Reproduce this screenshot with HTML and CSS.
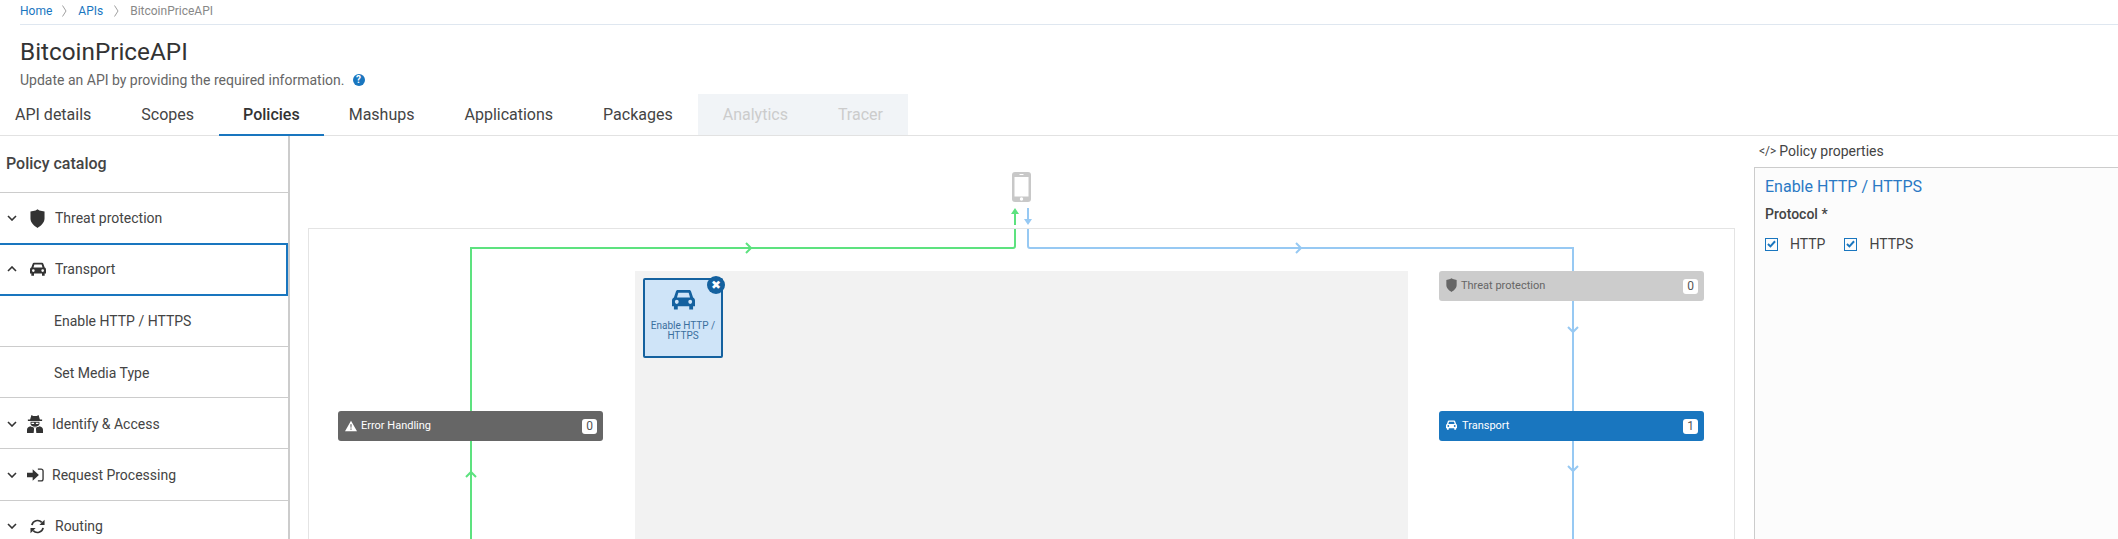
FILE: index.html
```html
<!DOCTYPE html>
<html lang="en">

<head>
    <meta charset="UTF-8" />
    <title>BitcoinPriceAPI - Policies</title>
    <link rel="stylesheet" href="styles.css">
</head>

<body>
    <svg class="defs" xmlns="http://www.w3.org/2000/svg">
        <symbol id="i-shield" viewBox="0 0 16 20">
            <path d="M8 0 L10 1.4 L15.5 2.6 V10 C15.5 14.5 11.5 18 8 20 C4.5 18 .5 14.5 .5 10 V2.6 L6 1.4 Z" />
        </symbol>
        <symbol id="i-car" viewBox="0 0 24 20" preserveAspectRatio="none">
            <path fill-rule="evenodd" d="M6 1 H18 C19 1 19.7 1.6 20 2.5 L22 8 C23.2 8.4 24 9.5 24 11 V16.5 H22 V19.5 H18 V16.5 H6 V19.5 H2 V16.5 H0 V11 C0 9.5 .8 8.4 2 8 L4 2.5 C4.3 1.6 5 1 6 1 Z M6.6 3.6 L5.2 8 H18.8 L17.4 3.6 Z M5 10.2 A2 2 0 1 0 5 14.2 A2 2 0 1 0 5 10.2 Z M19 10.2 A2 2 0 1 0 19 14.2 A2 2 0 1 0 19 10.2 Z" />
        </symbol>
        <symbol id="i-secret" viewBox="0 0 18 20">
            <path d="M5 0 L7 1 H11 L13 0 L14.5 5 H17 V6.5 H1 V5 H3.5 Z" />
            <path fill-rule="evenodd" d="M4 7.5 H14 V10 C14 11.5 12 13 9 13 C6 13 4 11.5 4 10 Z M5 8.5 V10 H8 V8.5 Z M10 8.5 V10 H13 V8.5 Z" />
            <path d="M4 12.5 C1.5 13 0 14.5 0 16.5 V20 H7.5 L8 15 L7 13.8 H11 L10 15 L10.5 20 H18 V16.5 C18 14.5 16.5 13 14 12.5 C12.5 14 5.5 14 4 12.5 Z" />
        </symbol>
        <symbol id="i-signin" viewBox="0 0 18 14">
            <path d="M0 4.5 H6 V.8 L12.6 7 L6 13.2 V9.5 H0 Z" />
            <path d="M11.5 .8 H15 A2 2 0 0 1 17 2.8 V11.2 A2 2 0 0 1 15 13.2 H11.5" fill="none" stroke="currentColor" stroke-width="1.4" />
        </symbol>
        <symbol id="i-refresh" viewBox="0 0 16 16">
            <path d="M2 6.6 A6.2 6.2 0 0 1 12.6 3.6" fill="none" stroke="currentColor" stroke-width="1.8" />
            <path d="M15.5 .8 V6.4 H10 Z" />
            <path d="M14 9.4 A6.2 6.2 0 0 1 3.4 12.4" fill="none" stroke="currentColor" stroke-width="1.8" />
            <path d="M.5 15.2 V9.6 H6 Z" />
        </symbol>
        <symbol id="i-down" viewBox="0 0 10 6">
            <path d="M1 1 L5 5 L9 1" fill="none" stroke="currentColor" stroke-width="1.6" />
        </symbol>
        <symbol id="i-up" viewBox="0 0 10 6">
            <path d="M1 5 L5 1 L9 5" fill="none" stroke="currentColor" stroke-width="1.6" />
        </symbol>
        <symbol id="i-crumb" viewBox="0 0 5 12">
            <path d="M.5 .5 L4 6 L.5 11.5" fill="none" stroke="currentColor" stroke-width=".8" />
        </symbol>
        <symbol id="i-check" viewBox="0 0 10 9">
            <path d="M1 4.5 L3.8 7.2 L9 1.4" fill="none" stroke="currentColor" stroke-width="2.2" />
        </symbol>
    </svg>

    <nav class="breadcrumb">
        <a href="#">Home</a>
        <svg class="crumb-sep"><use href="#i-crumb" /></svg>
        <a href="#">APIs</a>
        <svg class="crumb-sep"><use href="#i-crumb" /></svg>
        <span>BitcoinPriceAPI</span>
    </nav>

    <header class="page-head">
        <h1>BitcoinPriceAPI</h1>
        <p>Update an API by providing the required information. <span class="help">?</span></p>
    </header>

    <div class="tabs">
        <a class="tab" href="#">API details</a>
        <a class="tab" href="#">Scopes</a>
        <a class="tab active" href="#">Policies</a>
        <a class="tab" href="#">Mashups</a>
        <a class="tab" href="#">Applications</a>
        <a class="tab" href="#">Packages</a>
        <a class="tab disabled" href="#">Analytics</a>
        <a class="tab disabled" href="#">Tracer</a>
    </div>

    <main class="workspace">
        <aside class="catalog">
            <h2>Policy catalog</h2>
            <div class="cat-row">
                <svg class="chev"><use href="#i-down" /></svg>
                <svg class="cat-icon shield"><use href="#i-shield" /></svg>
                <span>Threat protection</span>
            </div>
            <div class="cat-row selected">
                <svg class="chev"><use href="#i-up" /></svg>
                <svg class="cat-icon car"><use href="#i-car" /></svg>
                <span>Transport</span>
            </div>
            <div class="cat-row sub">Enable HTTP / HTTPS</div>
            <div class="cat-row sub low">Set Media Type</div>
            <div class="cat-row low">
                <svg class="chev"><use href="#i-down" /></svg>
                <svg class="cat-icon secret"><use href="#i-secret" /></svg>
                <span>Identify &amp; Access</span>
            </div>
            <div class="cat-row low">
                <svg class="chev"><use href="#i-down" /></svg>
                <svg class="cat-icon signin"><use href="#i-signin" /></svg>
                <span>Request Processing</span>
            </div>
            <div class="cat-row low">
                <svg class="chev"><use href="#i-down" /></svg>
                <svg class="cat-icon refresh"><use href="#i-refresh" /></svg>
                <span>Routing</span>
            </div>
        </aside>

        <section class="canvas">
            <div class="frame"></div>
            <div class="drop-zone"></div>

            <svg class="wires" viewBox="0 0 1464 403" xmlns="http://www.w3.org/2000/svg">
                <g class="wire green">
                    <path d="M181 403 V112 H723 Q725 112 725 110 V93" />
                    <path class="tip" d="M456 107 L461 112 L456 117" />
                    <path class="tip" d="M176 341 L181 336 L186 341" />
                </g>
                <g class="wire blue">
                    <path d="M738 93 V110 Q738 112 740 112 H1283 V403" />
                    <path class="tip" d="M1006 107 L1011 112 L1006 117" />
                    <path class="tip" d="M1278 191 L1283 196 L1288 191" />
                    <path class="tip" d="M1278 330 L1283 335 L1288 330" />
                </g>
                <path class="arrow-up" d="M725 72 L729 78 H726 V89 H724 V78 H721 Z" />
                <path class="arrow-down" d="M738 89 L742 83 H739 V72 H737 V83 H734 Z" />
                <g class="phone">
                    <rect x="722" y="36" width="19" height="30" rx="3" />
                    <rect class="screen" x="724.5" y="41" width="14" height="19.5" />
                    <circle class="screen" cx="731.5" cy="63" r="1.7" />
                    <rect class="screen" x="729.5" y="38" width="4" height="1" />
                </g>
            </svg>

            <div class="node">
                <span class="node-close">&#10006;</span>
                <svg class="node-car"><use href="#i-car" /></svg>
                <span class="node-label">Enable HTTP / HTTPS</span>
            </div>

            <div class="stage stage-error">
                <svg class="stage-icon" viewBox="0 0 14 12"><path fill-rule="evenodd" d="M7 0 L14 12 H0 Z M6.2 4 L6.5 8 H7.5 L7.8 4 Z M6.3 9 V10.4 H7.7 V9 Z" /></svg>
                <span class="stage-name">Error Handling</span>
                <span class="count">0</span>
            </div>
            <div class="stage stage-threat">
                <svg class="stage-icon"><use href="#i-shield" /></svg>
                <span class="stage-name">Threat protection</span>
                <span class="count">0</span>
            </div>
            <div class="stage stage-transport">
                <svg class="stage-icon"><use href="#i-car" /></svg>
                <span class="stage-name">Transport</span>
                <span class="count">1</span>
            </div>
        </section>

        <aside class="props">
            <div class="props-head"><span class="code">&lt;/&gt;</span> Policy properties</div>
            <div class="props-body">
                <h3>Enable HTTP / HTTPS</h3>
                <div class="field-label">Protocol *</div>
                <div class="checks">
                    <label class="check"><span class="box"><svg><use href="#i-check" /></svg></span>HTTP</label>
                    <label class="check"><span class="box"><svg><use href="#i-check" /></svg></span>HTTPS</label>
                </div>
            </div>
        </aside>
    </main>
</body>
</html>
```

FILE: styles.css
```css
* {
    box-sizing: border-box;
}

html,
body {
    height: 539px;
    overflow: hidden;
}

body {
    margin: 0;
    font-family: Roboto, "Liberation Sans", sans-serif;
    background: #fff;
    color: #444;
    display: flex;
    flex-direction: column;
}

a {
    text-decoration: none;
}

.defs {
    display: none;
}

/* top of page */
.breadcrumb {
    margin-left: 20px;
    height: 25px;
    flex: none;
    display: flex;
    align-items: center;
    padding-bottom: 3px;
    font-size: 12px;
    color: #888;
    border-bottom: 1px solid #dfe7f0;
}

.breadcrumb a {
    color: #1976bf;
}

.crumb-sep {
    width: 5px;
    height: 12px;
    margin: 0 11px 0 10px;
    color: #888;
}

.crumb-sep + a + .crumb-sep {
    margin-left: 11px;
}

.page-head {
    flex: none;
    height: 69px;
    padding: 12px 0 0 20px;
}

.page-head h1 {
    margin: 0;
    font-size: 24.3px;
    line-height: 30px;
    font-weight: 400;
    color: #333;
}

.page-head p {
    margin: 3px 0 0;
    font-size: 14px;
    line-height: 20px;
    color: #666;
    display: flex;
    align-items: center;
    gap: 8px;
}

.help {
    width: 12px;
    height: 12px;
    border-radius: 50%;
    background: #1976bf;
    color: #fff;
    font-size: 10px;
    line-height: 12px;
    font-weight: 700;
    text-align: center;
}

.tabs {
    flex: none;
    height: 42px;
    display: flex;
    border-bottom: 1px solid #e2e2e2;
}

.tab {
    height: 41px;
    padding: 0 25px;
    font-size: 16px;
    line-height: 42px;
    color: #444;
}

.tab:first-child {
    padding-left: 15px;
}

.tab.active {
    color: #333;
    font-weight: 500;
    border-bottom: 2px solid #1976bf;
    height: 42px;
    padding: 0 24px;
}

.tab.disabled {
    background: #f1f4f7;
    color: #ccc;
}

/* three columns */
.workspace {
    flex: 1;
    display: flex;
    min-height: 0;
}

.catalog {
    flex: none;
    width: 290px;
    border-right: 2px solid #ccc;
}

.catalog h2 {
    margin: 0;
    height: 57px;
    padding-left: 6px;
    font-size: 16px;
    font-weight: 500;
    line-height: 55px;
    color: #444;
    border-bottom: 1px solid #ccc;
}

.cat-row {
    height: 51.3px;
    display: flex;
    align-items: center;
    padding-left: 7px;
    font-size: 14px;
    color: #444;
    border-bottom: 1px solid #ccc;
}

.cat-row.low {
    padding-top: 1px;
}

.cat-row.selected {
    border: 2px solid #1976bf;
    border-left: none;
    margin-top: -1px;
    height: 52.3px;
}

.cat-row.sub {
    padding-left: 54px;
}

.chev {
    width: 10px;
    height: 6px;
    flex: none;
    color: #333;
}

.cat-icon {
    flex: none;
    fill: #333;
    color: #333;
}

.shield {
    width: 15px;
    height: 19px;
    margin: 0 10px 0 13px;
}

.car {
    width: 16px;
    height: 14px;
    margin: 0 9px 0 13px;
}

.secret {
    width: 16px;
    height: 18px;
    margin: 0 9px 0 10px;
}

.signin {
    width: 17px;
    height: 14px;
    margin: 0 8px 0 10px;
}

.refresh {
    width: 15px;
    height: 15px;
    margin: 0 10px 0 13px;
}

/* diagram */
.canvas {
    flex: none;
    width: 1464px;
    position: relative;
    overflow: hidden;
}

.frame {
    position: absolute;
    left: 18px;
    top: 92px;
    width: 1427px;
    height: 340px;
    border: 1px solid #e4e4e4;
}

.drop-zone {
    position: absolute;
    left: 345px;
    top: 135px;
    width: 773px;
    height: 300px;
    background: #f2f2f2;
}

.wires {
    position: absolute;
    left: 0;
    top: 0;
    width: 1464px;
    height: 403px;
}

.wire path {
    fill: none;
    stroke-width: 2;
}

.wire.green path {
    stroke: #5de27f;
}

.wire.blue path {
    stroke: #97c9f3;
}

.arrow-up {
    fill: #5de27f;
}

.arrow-down {
    fill: #97c9f3;
}

.phone rect,
.phone circle {
    fill: #c8c8c8;
}

.phone .screen {
    fill: #fff;
}

.node {
    position: absolute;
    left: 353px;
    top: 142px;
    width: 80px;
    height: 80px;
    background: #cfe4f8;
    border: 2px solid #14619f;
    border-radius: 2px;
    display: flex;
    flex-direction: column;
    align-items: center;
    padding-top: 9px;
}

.node-car {
    width: 23px;
    height: 21px;
    fill: #14619f;
}

.node-label {
    margin-top: 11px;
    padding: 0 4px;
    font-size: 10px;
    line-height: 10px;
    text-align: center;
    color: #3b6f9e;
}

.node-close {
    position: absolute;
    right: -4px;
    top: -4px;
    width: 18px;
    height: 18px;
    border-radius: 50%;
    background: #14619f;
    color: #fff;
    font-size: 12px;
    line-height: 18px;
    text-align: center;
    font-family: "DejaVu Sans", sans-serif;
}

.stage {
    position: absolute;
    width: 265px;
    height: 30px;
    border-radius: 3px;
    display: flex;
    align-items: center;
    padding: 0 6px 0 7px;
    font-size: 11px;
    color: #fff;
}

.stage-error {
    left: 48px;
    top: 275px;
    background: #666;
}

.stage-threat {
    left: 1149px;
    top: 135px;
    background: #ccc;
    color: #666;
}

.stage-transport {
    left: 1149px;
    top: 275px;
    background: #1976bf;
}

.stage-icon {
    width: 12px;
    height: 12px;
    margin-right: 4px;
    fill: currentColor;
}

.stage-threat .stage-icon {
    width: 11px;
    height: 14px;
    margin-top: -2px;
    margin-right: 4px;
}

.stage-transport .stage-icon {
    width: 11px;
    height: 10px;
    margin-top: -2px;
    margin-right: 5px;
}

.stage-name {
    flex: 1;
    padding-bottom: 2px;
}

.count {
    width: 15px;
    height: 15px;
    border-radius: 3px;
    background: #fff;
    color: #555;
    font-size: 12px;
    line-height: 15px;
    text-align: center;
}

/* right column */
.props {
    flex: 1;
    display: flex;
    flex-direction: column;
}

.props-head {
    height: 31px;
    padding: 7px 0 0 5px;
    font-size: 14px;
    line-height: 16px;
    color: #444;
    display: flex;
    gap: 3px;
}

.code {
    font-size: 12px;
}

.props-body {
    flex: 1;
    background: #fcfcfc;
    border-top: 1px solid #ccc;
    border-left: 1px solid #ccc;
    padding: 9px 0 0 10px;
}

.props-body h3 {
    margin: 0;
    font-size: 16px;
    font-weight: 400;
    line-height: 20px;
    color: #2a79c4;
}

.field-label {
    margin-top: 7px;
    font-size: 14px;
    font-weight: 500;
    line-height: 20px;
    color: #444;
}

.checks {
    display: flex;
    gap: 19px;
    margin-top: 12px;
}

.check {
    display: flex;
    align-items: center;
    gap: 12px;
    font-size: 14px;
    line-height: 16px;
    color: #444;
}

.box {
    width: 13px;
    height: 13px;
    border: 1.5px solid #1976bf;
    display: flex;
    align-items: center;
    justify-content: center;
    color: #1976bf;
}

.box svg {
    width: 9px;
    height: 8px;
}
```
